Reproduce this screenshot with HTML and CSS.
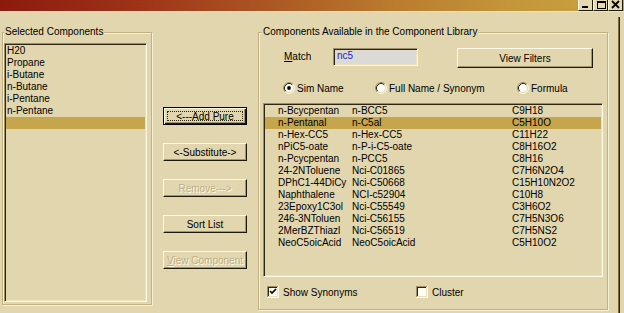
FILE: index.html
```html
<!DOCTYPE html>
<html>
<head>
<meta charset="utf-8">
<title>Component List</title>
<link rel="stylesheet" href="styles.css">
</head>
<body>
<div class="window">
  <div class="titlebar">
    <div class="caption-buttons">
      <span class="cbtn"><svg width="13" height="9" viewBox="0 0 13 9"><rect x="3" y="6" width="6" height="2" fill="#000"/></svg></span>
      <span class="cbtn"><svg width="13" height="9" viewBox="0 0 13 9"><rect x="3.5" y="1.5" width="8" height="7" fill="none" stroke="#000"/><rect x="3" y="1" width="9" height="2" fill="#000"/></svg></span>
      <span class="cbtn"><svg width="13" height="9" viewBox="0 0 13 9"><path d="M3 1 L10 8 M10 1 L3 8" stroke="#000" stroke-width="1.8"/></svg></span>
    </div>
  </div>
  <div class="content">
    <fieldset class="group group-selected">
      <legend>Selected Components</legend>
      <div class="listbox list-selected">
        <div class="row">H20</div>
        <div class="row">Propane</div>
        <div class="row">i-Butane</div>
        <div class="row">n-Butane</div>
        <div class="row">i-Pentane</div>
        <div class="row">n-Pentane</div>
        <div class="row selected">&nbsp;</div>
      </div>
    </fieldset>

    <div class="actions">
      <button class="btn default"><span class="focus">&lt;---Add Pure</span></button>
      <button class="btn">&lt;-Substitute-&gt;</button>
      <button class="btn disabled">Remove---&gt;</button>
      <button class="btn">Sort List</button>
      <button class="btn disabled"><span><u>V</u>iew Component</span></button>
    </div>

    <fieldset class="group group-library">
      <legend>Components Available in the Component Library</legend>
      <div class="match-row">
        <span class="match-label"><u>M</u>atch</span>
        <div class="textbox">nc5</div>
        <button class="btn filters">View Filters</button>
      </div>
      <div class="radio-row">
        <span class="option opt-sim">
          <svg class="radio" width="12" height="12" viewBox="0 0 12 12"><circle cx="6" cy="6" r="4.2" fill="#fffef8"/><path d="M9.89 2.11 A5.5 5.5 0 0 0 2.11 9.89" fill="none" stroke="#9c8e66"/><path d="M9.89 2.11 A5.5 5.5 0 0 1 2.11 9.89" fill="none" stroke="#fffbe8"/><path d="M9.18 2.82 A4.5 4.5 0 0 0 2.82 9.18" fill="none" stroke="#2e2610"/><path d="M9.18 2.82 A4.5 4.5 0 0 1 2.82 9.18" fill="none" stroke="#e9dfbd"/><circle cx="6" cy="6" r="1.9" fill="#000"/></svg>
          Sim Name
        </span>
        <span class="option opt-full">
          <svg class="radio" width="12" height="12" viewBox="0 0 12 12"><circle cx="6" cy="6" r="4.2" fill="#fffef8"/><path d="M9.89 2.11 A5.5 5.5 0 0 0 2.11 9.89" fill="none" stroke="#9c8e66"/><path d="M9.89 2.11 A5.5 5.5 0 0 1 2.11 9.89" fill="none" stroke="#fffbe8"/><path d="M9.18 2.82 A4.5 4.5 0 0 0 2.82 9.18" fill="none" stroke="#2e2610"/><path d="M9.18 2.82 A4.5 4.5 0 0 1 2.82 9.18" fill="none" stroke="#e9dfbd"/></svg>
          Full Name / Synonym
        </span>
        <span class="option opt-formula">
          <svg class="radio" width="12" height="12" viewBox="0 0 12 12"><circle cx="6" cy="6" r="4.2" fill="#fffef8"/><path d="M9.89 2.11 A5.5 5.5 0 0 0 2.11 9.89" fill="none" stroke="#9c8e66"/><path d="M9.89 2.11 A5.5 5.5 0 0 1 2.11 9.89" fill="none" stroke="#fffbe8"/><path d="M9.18 2.82 A4.5 4.5 0 0 0 2.82 9.18" fill="none" stroke="#2e2610"/><path d="M9.18 2.82 A4.5 4.5 0 0 1 2.82 9.18" fill="none" stroke="#e9dfbd"/></svg>
          Formula
        </span>
      </div>
      <div class="listbox list-library">
        <div class="lrow"><span class="c1">n-Bcycpentan</span><span class="c2">n-BCC5</span><span class="c3">C9H18</span></div>
        <div class="lrow selected"><span class="c1">n-Pentanal</span><span class="c2">n-C5al</span><span class="c3">C5H10O</span></div>
        <div class="lrow"><span class="c1">n-Hex-CC5</span><span class="c2">n-Hex-CC5</span><span class="c3">C11H22</span></div>
        <div class="lrow"><span class="c1">nPiC5-oate</span><span class="c2">n-P-i-C5-oate</span><span class="c3">C8H16O2</span></div>
        <div class="lrow"><span class="c1">n-Pcycpentan</span><span class="c2">n-PCC5</span><span class="c3">C8H16</span></div>
        <div class="lrow"><span class="c1">24-2NToluene</span><span class="c2">Nci-C01865</span><span class="c3">C7H6N2O4</span></div>
        <div class="lrow"><span class="c1">DPhC1-44DiCy</span><span class="c2">Nci-C50668</span><span class="c3">C15H10N2O2</span></div>
        <div class="lrow"><span class="c1">Naphthalene</span><span class="c2">NCI-c52904</span><span class="c3">C10H8</span></div>
        <div class="lrow"><span class="c1">23Epoxy1C3ol</span><span class="c2">Nci-C55549</span><span class="c3">C3H6O2</span></div>
        <div class="lrow"><span class="c1">246-3NToluen</span><span class="c2">Nci-C56155</span><span class="c3">C7H5N3O6</span></div>
        <div class="lrow"><span class="c1">2MerBZThiazl</span><span class="c2">Nci-C56519</span><span class="c3">C7H5NS2</span></div>
        <div class="lrow"><span class="c1">NeoC5oicAcid</span><span class="c2">NeoC5oicAcid</span><span class="c3">C5H10O2</span></div>
      </div>
      <div class="check-row">
        <span class="option opt-syn">
          <svg class="check" width="12" height="12" viewBox="0 0 12 12"><rect x="0" y="0" width="12" height="12" fill="#fffbe8"/><rect x="0" y="0" width="11" height="11" fill="#9c8e66"/><rect x="1" y="1" width="10" height="10" fill="#e9dfbd"/><rect x="1" y="1" width="9" height="9" fill="#2e2610"/><rect x="2" y="2" width="8" height="8" fill="#fffdf4"/><path d="M3 5 L5 7 L9 3" fill="none" stroke="#000" stroke-width="1.7"/></svg>
          Show Synonyms
        </span>
        <span class="option opt-cluster">
          <svg class="check" width="12" height="12" viewBox="0 0 12 12"><rect x="0" y="0" width="12" height="12" fill="#fffbe8"/><rect x="0" y="0" width="11" height="11" fill="#9c8e66"/><rect x="1" y="1" width="10" height="10" fill="#e9dfbd"/><rect x="1" y="1" width="9" height="9" fill="#2e2610"/><rect x="2" y="2" width="8" height="8" fill="#fffdf4"/></svg>
          Cluster
        </span>
      </div>
    </fieldset>

    <div class="edge"></div>
  </div>
</div>
</body>
</html>
```

FILE: styles.css
```css
html, body {
  margin: 0;
  padding: 0;
}

body {
  width: 624px;
  height: 313px;
  overflow: hidden;
  background: #e2d6ae;
  font-family: "Liberation Sans", Arial, sans-serif;
  font-size: 10px;
  color: #000;
}

.window {
  width: 624px;
  height: 313px;
}

/* title bar */
.titlebar {
  height: 11px;
  background: linear-gradient(90deg, #8c1a0e 0%, #9e3318 22%, #ab5522 42%, #b97a2c 62%, #c4963a 82%, #c9a240 100%);
  border-bottom: 1px solid #efe4c2;
  display: flex;
  justify-content: flex-end;
}

.caption-buttons {
  display: flex;
  margin-right: 1px;
}

.cbtn {
  box-sizing: border-box;
  width: 15px;
  height: 11px;
  background: #e6dab2;
  border-left: 1px solid #fffbe8;
  border-right: 1px solid #1e1a0c;
  border-bottom: 1px solid #1e1a0c;
  display: flex;
  align-items: flex-start;
  justify-content: center;
}

.cbtn svg {
  display: block;
}

/* main layout */
.content {
  display: flex;
  align-items: flex-start;
  padding-left: 2px;
}

.group {
  box-sizing: border-box;
  margin: 14px 0 0 0;
  padding: 0;
  min-width: 0;
  border: 1px solid #c2b283;
  box-shadow: inset 1px 1px 0 #f8f0d6, 1px 1px 0 #f8f0d6;
}

.group legend {
  padding: 0 1px;
  line-height: 12px;
  font-size: 10px;
  background: #e2d6ae;
}

.group-selected {
  width: 150px;
  padding-bottom: 2px;
}

.group-selected legend {
  margin-left: 1px;
}

.group-library {
  width: 350px;
  margin-left: 11px;
  padding-bottom: 11px;
}

.group-library legend {
  margin-left: 3px;
}

/* list boxes */
.listbox {
  box-sizing: border-box;
  background: #e2d6ae;
  border: 1px solid;
  border-color: #9c8e66 #fffbe8 #fffbe8 #9c8e66;
  box-shadow: inset 1px 1px 0 #2e2610, inset -1px -1px 0 #eae0be;
  padding: 1px;
}

.list-selected {
  width: 143px;
  height: 259px;
  margin: 5px 0 0 1px;
}

.row {
  height: 12px;
  line-height: 12px;
  padding-left: 1px;
  white-space: nowrap;
}

.selected {
  background: #c6a64c;
}

.list-library {
  width: 340px;
  height: 174px;
  margin: 9px 0 0 4px;
}

.lrow {
  display: flex;
  height: 12px;
  line-height: 12px;
  padding-left: 13px;
  white-space: nowrap;
}

.c1 { width: 74px; }
.c2 { width: 160px; }
.c3 { flex: 1; }

/* buttons */
.actions {
  display: flex;
  flex-direction: column;
  gap: 18px;
  margin: 14px 0 0 11px;
  padding-top: 81px;
}

.btn {
  box-sizing: border-box;
  width: 84px;
  height: 18px;
  margin: 0;
  padding: 0;
  background: #e2d6ae;
  border: 1px solid;
  border-color: #fffbe8 #1e1a0c #1e1a0c #fffbe8;
  box-shadow: inset -1px -1px 0 #a4966c;
  font-family: "Liberation Sans", Arial, sans-serif;
  font-size: 10px;
  color: #000;
  display: flex;
  align-items: center;
  justify-content: center;
  white-space: nowrap;
}

.btn.default {
  border-color: #000;
  box-shadow: inset 1px 1px 0 #fffbe8, inset -1px -1px 0 #1e1a0c, inset -2px -2px 0 #a4966c;
  padding: 3px;
}

.btn .focus {
  box-sizing: border-box;
  flex: 1;
  align-self: stretch;
  border: 1px dotted #2a2410;
  display: flex;
  align-items: center;
  justify-content: center;
}

.btn.disabled {
  color: #bcae86;
  text-shadow: 1px 1px 0 #fffaea;
}

/* match row */
.match-row {
  display: flex;
  align-items: flex-start;
  margin-top: 10px;
  height: 20px;
}

.match-label {
  width: 49px;
  margin-left: 25px;
  line-height: 18px;
}

.textbox {
  box-sizing: border-box;
  width: 85px;
  height: 18px;
  background: #dcdad4;
  border: 1px solid;
  border-color: #9c8e66 #fffbe8 #fffbe8 #9c8e66;
  box-shadow: inset 1px 1px 0 #2e2610, inset -1px -1px 0 #eae0be;
  color: #2424c8;
  padding-left: 3px;
  line-height: 13px;
}

.btn.filters {
  width: 136px;
  height: 20px;
  margin-left: 39px;
}

/* radio row */
.radio-row {
  display: flex;
  align-items: center;
  margin-top: 14px;
  height: 12px;
  padding-left: 24px;
}

.option {
  display: flex;
  align-items: center;
  white-space: nowrap;
}

.radio {
  display: block;
  margin-right: 2px;
  flex: none;
}

.opt-sim { width: 92px; }
.opt-full { width: 142px; }

/* checkboxes */
.check-row {
  display: flex;
  align-items: center;
  margin-top: 9px;
  height: 12px;
  padding-left: 8px;
}

.check {
  display: block;
  margin-right: 4px;
  flex: none;
}

.opt-syn { width: 149px; }

/* right edge of the frame */
.edge {
  box-sizing: border-box;
  width: 2px;
  height: 300px;
  margin: 5px 0 0 10px;
  border-left: 1px solid #7a6a40;
  background: #2e240c;
}
```
